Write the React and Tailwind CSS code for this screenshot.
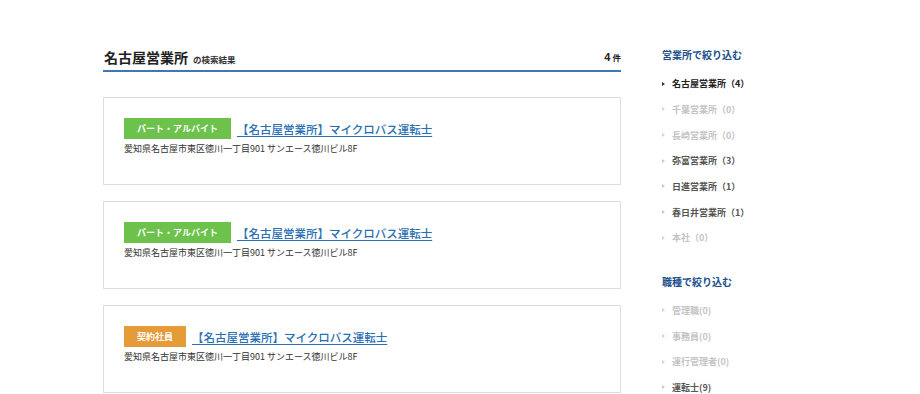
const font = { fontFamily: '"Noto Sans CJK JP", "Noto Sans", sans-serif' };

const jobs = [
  { type: 'パート・アルバイト', color: 'bg-[#6cc24a]' },
  { type: 'パート・アルバイト', color: 'bg-[#6cc24a]' },
  { type: '契約社員', color: 'bg-[#e49b38]' },
];

const offices = [
  { label: '名古屋営業所（4）', state: 'active' },
  { label: '千葉営業所（0）', state: 'empty' },
  { label: '長崎営業所（0）', state: 'empty' },
  { label: '弥富営業所（3）', state: 'on' },
  { label: '日進営業所（1）', state: 'on' },
  { label: '春日井営業所（1）', state: 'on' },
  { label: '本社（0）', state: 'empty' },
];

const kinds = [
  { label: '管理職(0)', state: 'empty' },
  { label: '事務員(0)', state: 'empty' },
  { label: '運行管理者(0)', state: 'empty' },
  { label: '運転士(9)', state: 'on' },
];

const textColor = {
  active: 'text-[#222]',
  on: 'text-[#555]',
  empty: 'text-[#c4c4c4]',
};

const arrowColor = {
  active: 'border-l-[#333]',
  on: 'border-l-[#c8c8c8]',
  empty: 'border-l-[#d4d4d4]',
};

const FilterList = ({ items }) => (
  <ul className="mt-[6px]">
    {items.map((item) => (
      <li key={item.label} className="h-[25.67px] flex items-center">
        <span className={`w-0 h-0 border-y-[2.5px] border-y-transparent border-l-[3px] ${arrowColor[item.state]}`}></span>
        <span className={`ml-[7px] text-[9px] font-bold leading-none ${textColor[item.state]}`}>{item.label}</span>
      </li>
    ))}
  </ul>
);

const App = () => {
  return (
    <div className="w-[920px] h-[394px] overflow-hidden bg-white flex pt-[45px]" style={font}>
      <main className="ml-[103px] w-[518px]">
        <div className="h-[27px] flex items-start pt-[2px] justify-between pl-px border-b-2 border-[#3f76ba]">
          <h1 className="flex items-baseline">
            <span className="text-[14px] font-bold text-[#222] leading-[20px]">名古屋営業所</span>
            <span className="ml-[5px] text-[8.5px] font-bold text-[#333]">の検索結果</span>
          </h1>
          <p className="flex items-baseline text-[#222] font-bold leading-[20px]">
            <span className="text-[11px]" style={{ fontFamily: '"Liberation Sans", sans-serif' }}>4</span>
            <span className="ml-[2px] text-[8.5px]">件</span>
          </p>
        </div>

        <div className="mt-[25px] flex flex-col gap-[16px]">
          {jobs.map((job, i) => (
            <div key={i} className="h-[88px] border border-[#dcdcdc] pt-[20px] pl-[20px]">
              <div className="flex items-center gap-[6px]">
                <span className={`${job.color} h-[21px] px-[13px] flex items-center text-white text-[9px] font-bold leading-none`}>
                  {job.type}
                </span>
                <a href="#" className="text-[11.5px] font-medium text-[#2a6fb3] underline underline-offset-[2px] leading-[16px]">
                  【名古屋営業所】マイクロバス運転士
                </a>
              </div>
              <p className="mt-[3px] text-[9px] text-[#333] leading-[14px]">愛知県名古屋市東区徳川一丁目901 サンエース徳川ビル8F</p>
            </div>
          ))}
        </div>
      </main>

      <aside className="ml-[41px] w-[160px]">
        <h2 className="text-[10px] font-bold text-[#214f8c] leading-[20px]">営業所で絞り込む</h2>
        <FilterList items={offices} />
        <h2 className="mt-[21px] text-[10px] font-bold text-[#214f8c] leading-[20px]">職種で絞り込む</h2>
        <FilterList items={kinds} />
      </aside>
    </div>
  );
};

export default App;
